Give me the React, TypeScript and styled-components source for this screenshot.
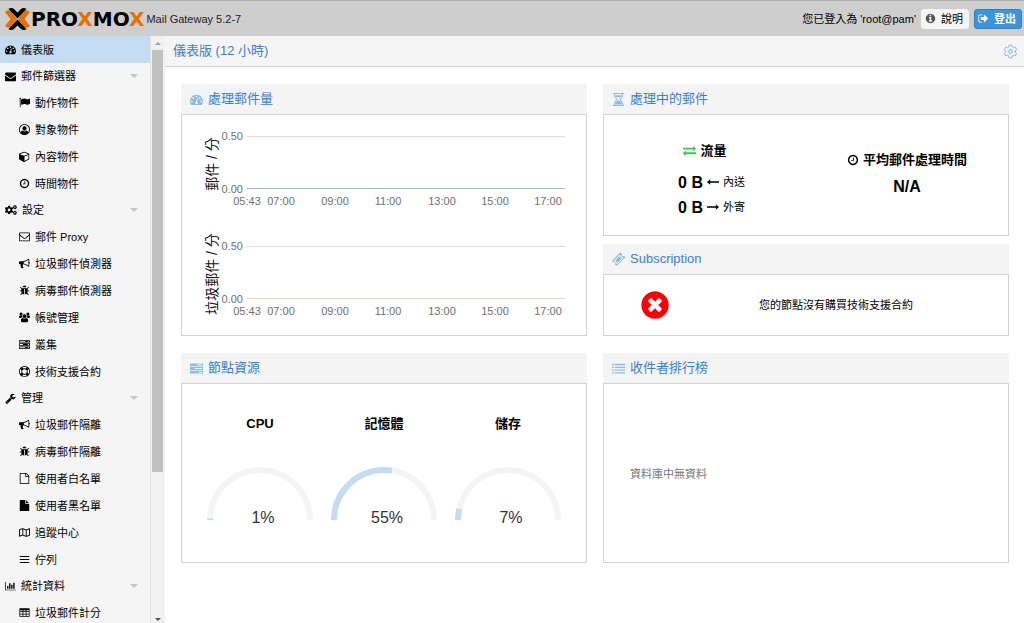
import React from "react";
import styled, { createGlobalStyle } from "styled-components";
import { FaCogs, FaRegMap } from "react-icons/fa";
import { IoSettingsOutline } from "react-icons/io5";

const GlobalStyle = createGlobalStyle`
  * { box-sizing: border-box; }
  body {
    margin: 0;
    background: #fff;
    color: #000;
    font: 11px/16px "Liberation Sans", "Noto Sans CJK TC", sans-serif;
  }
  button { font: inherit; cursor: pointer; }
  h1, h2, h3, ul, p { margin: 0; padding: 0; font-weight: normal; }
  ul { list-style: none; }
`;

/* ---------- icons ---------- */

const DISC =
  "M1664 896q0 209-103 385.5t-279.5 279.5-385.5 103-385.5-103-279.5-279.5-103-385.5 103-385.5 279.5-279.5 385.5-103 385.5 103 279.5 279.5 103 385.5z";

const paths = {
  gauge:
    "M384 1152q0-53-37.5-90.5t-90.5-37.5-90.5 37.5-37.5 90.5 37.5 90.5 90.5 37.5 90.5-37.5 37.5-90.5zm192-448q0-53-37.5-90.5t-90.5-37.5-90.5 37.5-37.5 90.5 37.5 90.5 90.5 37.5 90.5-37.5 37.5-90.5zm428 481l101-382q6-26-7.5-48.5t-38.5-29.5-48 6.5-30 39.5l-101 382q-60 5-107 43.5t-63 98.5q-20 77 20 146t117 89 146-20 89-117q16-60-6-117t-72-91zm660-33q0-53-37.5-90.5t-90.5-37.5-90.5 37.5-37.5 90.5 37.5 90.5 90.5 37.5 90.5-37.5 37.5-90.5zm-640-640q0-53-37.5-90.5t-90.5-37.5-90.5 37.5-37.5 90.5 37.5 90.5 90.5 37.5 90.5-37.5 37.5-90.5zm448 192q0-53-37.5-90.5t-90.5-37.5-90.5 37.5-37.5 90.5 37.5 90.5 90.5 37.5 90.5-37.5 37.5-90.5zm320 448q0 261-141 483-19 29-54 29h-1402q-35 0-54-29-141-221-141-483 0-182 71-348t191-286 286-191 348-71 348 71 286 191 191 286 71 348z",
  envelope:
    "M1792 710v794q0 66-47 113t-113 47h-1472q-66 0-113-47t-47-113v-794q44 49 101 87 362 246 497 345 57 42 92.5 65.5t94.5 48 110 24.5h2q51 0 110-24.5t94.5-48 92.5-65.5q170-123 498-345 57-39 100-87zm0-294q0 79-49 151t-122 123q-376 261-468 325-10 7-42.5 31t-54 38.5-52 32.5-57.5 27-50 9h-2q-23 0-50-9t-57.5-27-52-32.5-54-38.5-42.5-31q-91-64-262-182.5t-205-142.5q-62-42-117-115.5t-55-136.5q0-78 41.5-130t118.5-52h1472q65 0 112.5 47t47.5 113z",
  envelopeOpen:
    "M1664 1504v-768q-32 36-69 66-268 206-426 338-51 43-83 67t-86.5 48.5-102.5 24.5h-2q-48 0-102.5-24.5t-86.5-48.5-83-67q-158-132-426-338-37-30-69-66v768q0 13 9.5 22.5t22.5 9.5h1472q13 0 22.5-9.5t9.5-22.5zm0-1051v-24.5l-.5-13-3-12.5-5.5-9-9-7.5-14-2.5h-1472q-13 0-22.5 9.5t-9.5 22.5q0 168 147 284 193 152 401 317 6 5 35 29.5t46 37.5 44.5 31.5 50.5 27.5 43 9h2q20 0 43-9t50.5-27.5 44.5-31.5 46-37.5 35-29.5q208-165 401-317 54-43 100.5-115.5t46.5-131.5zm128-37v1088q0 66-47 113t-113 47h-1472q-66 0-113-47t-47-113v-1088q0-66 47-113t113-47h1472q66 0 113 47t47 113z",
  flag:
    "M320 256q0 72-64 110v1266q0 13-9.5 22.5t-22.5 9.5h-64q-13 0-22.5-9.5t-9.5-22.5v-1266q-64-38-64-110 0-53 37.5-90.5t90.5-37.5 90.5 37.5 37.5 90.5zm1472 64v763q0 25-12.5 38.5t-39.5 27.5q-215 116-369 116-61 0-123.5-22t-108.5-48-115.5-48-142.5-22q-192 0-464 146-17 9-33 9-26 0-45-19t-19-45v-742q0-32 31-55 21-14 79-43 236-120 421-120 107 0 200 29t219 88q38 19 88 19 54 0 117.5-21t110-47 88-47 54.5-21q26 0 45 19t19 45z",
  user:
    "M896 0a896 896 0 1 0 0 1792a896 896 0 1 0 0-1792zM896 140a756 756 0 0 1 590 1230c-50-200-150-300-300-310a400 400 0 0 1-580 0c-150 10-250 110-300 310A756 756 0 0 1 896 140zM896 380a350 350 0 1 1 0 700a350 350 0 1 1 0-700z",
  users:
    "M896 352a320 320 0 1 1 0 640a320 320 0 1 1 0-640zM560 960q150 110 336 110t336-110q260 30 260 480 0 224-192 224H492q-192 0-192-224 0-450 260-480zM340 64a250 250 0 1 1 0 500a250 250 0 1 1 0-500zM1452 64a250 250 0 1 1 0 500a250 250 0 1 1 0-500zM130 560q200 120 370 30 0 160 50 260-150 20-220 120H150Q-10 970-10 830 0 600 130 560zM1662 560q-200 120-370 30 0 160-50 260 150 20 220 120h180q160 0 160-140-10-230-140-270z",
  cube:
    "M896 1629l640-349v-636l-640 233v752zm-64-865l698-254-698-254-698 254zm832-252v768q0 35-18 65t-49 47l-704 384q-28 16-61 16t-61-16l-704-384q-31-17-49-47t-18-65v-768q0-40 23-73t61-47l704-256q22-8 44-8t44 8l704 256q38 14 61 47t23 73z",
  clock:
    "M1024 544v448q0 14-9 23t-23 9h-320q-14 0-23-9t-9-23v-64q0-14 9-23t23-9h224v-352q0-14 9-23t23-9h64q14 0 23 9t9 23zm416 352q0-148-73-273t-198-198-273-73-273 73-198 198-73 273 73 273 198 198 273 73 273-73 198-198 73-273zm224 0q0 209-103 385.5t-279.5 279.5-385.5 103-385.5-103-279.5-279.5-103-385.5 103-385.5 279.5-279.5 385.5-103 385.5 103 279.5 279.5 103 385.5z",
  bullhorn:
    "M1664 640q53 0 90.5 37.5t37.5 90.5-37.5 90.5-90.5 37.5v384q0 52-38 90t-90 38q-417-347-812-380-58 19-91 66t-31 100.5 40 92.5q-20 33-23 65.5t6 58 33.5 55 48 50 61.5 50.5q-29 58-111.5 83t-168.5 11.5-132-55.5q-7-23-29.5-87.5t-32-94.5-23-89-15-101 3.5-98.5 22-110.5h-122q-66 0-113-47t-47-113v-192q0-66 47-113t113-47h480q435 0 896-384 52 0 90 38t38 90v384zm-128 604v-954q-394 302-768 343v270q377 42 768 341z",
  bug:
    "M1696 960q0 26-19 45t-45 19h-224q0 171-67 290l208 209q19 19 19 45t-19 45q-18 19-45 19t-45-19l-198-197q-5 5-15 13t-42 28.5-65 36.5-82 29-97 13v-896h-128v896q-51 0-101.5-13.5t-87-33-66-39-43.5-32.5l-15-14-183 207q-20 21-48 21-24 0-43-16-19-18-20.5-44.5t15.5-46.5l202-227q-58-114-58-274h-224q-26 0-45-19t-19-45 19-45 45-19h224v-294l-173-173q-19-19-19-45t19-45 45-19 45 19l173 173h844l173-173q19-19 45-19t45 19 19 45-19 45l-173 173v294h224q26 0 45 19t19 45zm-480-576h-640q0-133 93.5-226.5t226.5-93.5 226.5 93.5 93.5 226.5z",
  server:
    "M0 192h1792v384H0zM128 320v128h896v-128zM1440 320v128h192v-128zM0 704h1792v384H0zM128 832v128h512v-128zM1440 832v128h192v-128zM0 1216h1792v384H0zM128 1344v128h896v-128zM1440 1344v128h192v-128z",
  ring:
    "M896 0q182 0 348 71t286 191 191 286 71 348-71 348-191 286-286 191-348 71-348-71-286-191-191-286-71-348 71-348 191-286 286-191 348-71zm0 128q-190 0-361 90l194 194q82-28 167-28t167 28l194-194q-171-90-361-90zm-678 1129l194-194q-28-82-28-167t28-167l-194-194q-90 171-90 361t90 361zm678 407q190 0 361-90l-194-194q-82 28-167 28t-167-28l-194 194q171 90 361 90zm0-384q159 0 271.5-112.5t112.5-271.5-112.5-271.5-271.5-112.5-271.5 112.5-112.5 271.5 112.5 271.5 271.5 112.5zm484-217l194 194q90-171 90-361t-90-361l-194 194q28 82 28 167t-28 167z",
  wrench:
    "M448 1472q0-26-19-45t-45-19-45 19-19 45 19 45 45 19 45-19 19-45zm644-420l-682 682q-37 37-90 37-52 0-91-37l-106-108q-38-36-38-90 0-53 38-91l681-681q39 98 114.5 173.5t173.5 114.5zm634-435q0 39-23 106-47 134-164.5 217.5t-258.5 83.5q-185 0-316.5-131.5t-131.5-316.5 131.5-316.5 316.5-131.5q58 0 121.5 16.5t107.5 46.5q16 11 16 28t-16 28l-293 169v224l193 107q5-3 79-48.5t135.5-81 70.5-35.5q15 0 23.5 10t8.5 25z",
  fileOpen:
    "M1596 380q28 28 48 76t20 88v1152q0 40-28 68t-68 28H224q-40 0-68-28t-28-68V96q0-40 28-68t68-28h896q40 0 88 20t76 48zM1152 136v376h376q-10-29-22-41l-313-313q-12-12-41-22zM1536 1664V640h-416q-40 0-68-28t-28-68V128H256v1536z",
  file:
    "M1152 512v-472q22 14 36 28l408 408q14 14 28 36h-472zm-128 32q0 40 28 68t68 28h544v1056q0 40-28 68t-68 28h-1344q-40 0-68-28t-28-68v-1600q0-40 28-68t68-28h800v544z",
  bars: "M128 320h1536v180H128zM128 806h1536v180H128zM128 1292h1536v180H128z",
  chart:
    "M560 832v448h-224v-448zM896 384v896h-224v-896zM1792 1408v112H0V176h112v1232zM1232 608v672h-224v-672zM1568 272v1008h-224V272z",
  table:
    "M160 192h1472q96 0 96 96v1216q0 96-96 96H160q-96 0-96-96V288q0-96 96-96zM192 512v192h384V512zM704 512v192h384V512zM1216 512v192h384V512zM192 832v256h384V832zM704 832v256h384V832zM1216 832v256h384V832zM192 1216v256h384v-256zM704 1216v256h384v-256zM1216 1216v256h384v-256z",
  exchange:
    "M1792 1184v192q0 13-9.5 22.5t-22.5 9.5h-1376v192q0 13-9.5 22.5t-22.5 9.5q-12 0-24-10l-319-320q-9-9-9-22 0-14 9-23l320-320q9-9 23-9 13 0 22.5 9.5t9.5 22.5v192h1376q13 0 22.5 9.5t9.5 22.5zm0-544q0 14-9 23l-320 320q-9 9-23 9-13 0-22.5-9.5t-9.5-22.5v-192h-1376q-13 0-22.5-9.5t-9.5-22.5v-192q0-13 9.5-22.5t22.5-9.5h1376v-192q0-14 9-23t23-9q12 0 24 10l319 319q9 9 9 23z",
  hourglass:
    "M128 0h1536v128H128zM128 1664h1536v128H128zM256 128h128q0 420 330 660v216Q384 1244 384 1664H256q0-480 340-768Q256 608 256 128zM1536 128h-128q0 420-330 660v216q330 240 330 660h128q0-480-340-768q340-288 340-768zM440 320h912q-30 130-110 220H550q-80-90-110-220zM896 1010q300 150 420 430l30 160H446l30-160q120-280 420-430z",
  ticket:
    "M1024 452l316 316-572 572-316-316zM1702 724l-978 980q-38 36-91 36t-90-36l-138-136q56-56 56-136t-56-136-136-56-136 56L90 1160q-37-38-37-91t37-90L1068 2q37-38 90-38t91 38l136 134q-56 56-56 136t56 136 136 56 136-56l137 136q36 37 36 90t-36 90zM768 1521l753-753q19-19 19-45t-19-45l-407-407q-18-18-45-18t-45 18l-753 753q-19 19-19 45t19 45l407 407q18 18 45 18t45-18z",
  tasks:
    "M0 192h1792v384H0zM1024 320v128h640v-128zM0 704h1792v384H0zM640 832v128h1024v-128zM0 1216h1792v384H0zM1216 1344v128h448v-128z",
  list:
    "M0 256h256v192H0zM384 256h1408v192H384zM0 640h256v192H0zM384 640h1408v192H384zM0 1024h256v192H0zM384 1024h1408v192H384zM0 1408h256v192H0zM384 1408h1408v192H384z",
  info:
    "M1152 1376v-160q0-14-9-23t-23-9h-96v-512q0-14-9-23t-23-9h-320q-14 0-23 9t-9 23v160q0 14 9 23t23 9h96v320h-96q-14 0-23 9t-9 23v160q0 14 9 23t23 9h448q14 0 23-9t9-23zm-128-896v-160q0-14-9-23t-23-9h-192q-14 0-23 9t-9 23v160q0 14 9 23t23 9h192q14 0 23-9t9-23z" +
    DISC,
  signOut:
    "M704 1440v64q0 32-32 32H352q-119 0-203.5-84.5T64 1248V544q0-119 84.5-203.5T352 256h320q32 0 32 32v64q0 32-32 32H352q-66 0-113 47t-47 113v704q0 66 47 113t113 47h312q40 0 40 32zM1632 896q0 26-19 45l-544 544q-19 19-45 19t-45-19-19-45v-288H512q-26 0-45-19t-19-45V704q0-26 19-45t45-19h448V352q0-26 19-45t45-19 45 19l544 544q19 19 19 45z",
  times:
    "M1277 1122q0-26-19-45l-181-181 181-181q19-19 19-45 0-27-19-46l-90-90q-19-19-46-19-26 0-45 19l-181 181-181-181q-19-19-45-19-27 0-46 19l-90 90q-19 19-19 46 0 26 19 45l181 181-181 181q-19 19-19 45 0 27 19 46l90 90q19 19 46 19 26 0 45-19l181-181 181 181q19 19 45 19 27 0 46-19l90-90q19-19 19-46z" +
    DISC,
  arrowLeft: "M0 896l480-400v300h1312v200H480v300z",
  arrowRight: "M1792 896l-480-400v300H0v200h1312v300z",
};

type GlyphName = keyof typeof paths;

const Svg = styled.svg<{ $size: number }>`
  width: ${(p) => p.$size}px;
  height: ${(p) => p.$size}px;
  flex: none;
  fill: currentColor;
  overflow: visible;
`;

const Glyph = ({ name, size = 11 }: { name: GlyphName; size?: number }) => (
  <Svg $size={size} viewBox="0 0 1792 1792" aria-hidden="true">
    <path fillRule="evenodd" d={paths[name]} />
  </Svg>
);

/* ---------- header ---------- */

const Page = styled.div`
  height: 100vh;
  display: grid;
  grid-template: 36px minmax(0, 1fr) / 165px minmax(0, 1fr);
`;

const Header = styled.header`
  grid-column: 1 / -1;
  display: flex;
  align-items: center;
  padding: 0 2px 0 5px;
  background: #cecece;
  border-top: 1px solid #b4b4b4;
`;

const Mark = styled.svg`
  width: 25px;
  height: 22px;
`;

const Wordmark = styled.span`
  margin: 0 2px 0 1px;
  font: bold 20px/24px "DejaVu Sans", sans-serif;
  color: #000;
  em {
    font-style: normal;
    color: #e57000;
  }
`;

const Product = styled.h1`
  flex: 1;
  font-size: 11px;
  color: #222;
`;

const HeaderButton = styled.button<{ $primary?: boolean }>`
  display: flex;
  align-items: center;
  gap: 5px;
  height: 20px;
  margin-left: 5px;
  padding: 0 5px 0 3px;
  border: 1px solid ${(p) => (p.$primary ? "#3080c0" : "#f5f5f5")};
  border-radius: 3px;
  background: ${(p) => (p.$primary ? "#3f94d6" : "#f5f5f5")};
  color: ${(p) => (p.$primary ? "#fff" : "#000")};
  font-weight: ${(p) => (p.$primary ? "bold" : "normal")};
  svg {
    color: ${(p) => (p.$primary ? "#fff" : "#555")};
  }
`;

/* ---------- sidebar ---------- */

const Sidebar = styled.aside`
  display: flex;
  min-height: 0;
  background: #f5f5f5;
`;

const Nav = styled.nav`
  flex: 1;
  overflow: hidden;
  border-right: 1px solid #e2e2e2;
`;

const NavLink = styled.a<{ $level: "top" | "group" | "child"; $active?: boolean }>`
  display: flex;
  align-items: center;
  height: ${(p) => (p.$level === "group" ? 26 : 27)}px;
  padding: 0 12px 0 ${(p) => (p.$level === "child" ? 19 : 5)}px;
  gap: 5px;
  color: #000;
  text-decoration: none;
  background: ${(p) => (p.$active ? "#c3dcf2" : "transparent")};
  svg {
    flex: none;
  }
  span {
    flex: 1;
    white-space: nowrap;
  }
`;

const Caret = styled.i<{ $up?: boolean; $size: number; $color: string }>`
  width: 0;
  height: 0;
  border: ${(p) => p.$size}px solid transparent;
  border-${(p) => (p.$up ? "bottom" : "top")}-color: ${(p) => p.$color};
  border-${(p) => (p.$up ? "top" : "bottom")}-width: 0;
`;

const Scrollbar = styled.div`
  width: 14px;
  display: flex;
  flex-direction: column;
  align-items: center;
  padding: 6px 2px 2px 1px;
  gap: 5px;
  background: #f1f1f1;
`;

const Track = styled.div`
  flex: 1;
  width: 100%;
`;

const Thumb = styled.div`
  height: 75%;
  background: #c1c1c1;
`;

type Item = { label: string; icon: React.ReactNode };
const g = (name: GlyphName) => <Glyph name={name} />;

const groups: { label: string; icon: React.ReactNode; items: Item[] }[] = [
  {
    label: "郵件篩選器",
    icon: g("envelope"),
    items: [
      { label: "動作物件", icon: g("flag") },
      { label: "對象物件", icon: g("user") },
      { label: "內容物件", icon: g("cube") },
      { label: "時間物件", icon: g("clock") },
    ],
  },
  {
    label: "設定",
    icon: <FaCogs size={12} />,
    items: [
      { label: "郵件 Proxy", icon: g("envelopeOpen") },
      { label: "垃圾郵件偵測器", icon: g("bullhorn") },
      { label: "病毒郵件偵測器", icon: g("bug") },
      { label: "帳號管理", icon: g("users") },
      { label: "叢集", icon: g("server") },
      { label: "技術支援合約", icon: g("ring") },
    ],
  },
  {
    label: "管理",
    icon: g("wrench"),
    items: [
      { label: "垃圾郵件隔離", icon: g("bullhorn") },
      { label: "病毒郵件隔離", icon: g("bug") },
      { label: "使用者白名單", icon: g("fileOpen") },
      { label: "使用者黑名單", icon: g("file") },
      { label: "追蹤中心", icon: <FaRegMap size={11} /> },
      { label: "佇列", icon: g("bars") },
    ],
  },
  {
    label: "統計資料",
    icon: g("chart"),
    items: [{ label: "垃圾郵件計分", icon: g("table") }],
  },
];

/* ---------- content ---------- */

const Main = styled.main`
  min-width: 0;
  overflow: hidden;
`;

const Toolbar = styled.div`
  display: flex;
  align-items: center;
  justify-content: space-between;
  height: 31px;
  padding: 0 6px 0 8px;
  background: #f5f5f5;
  border-bottom: 1px solid #d0d0d0;
  color: #3d7fc8;
`;

const Title = styled.h2`
  font-size: 13px;
`;

const IconButton = styled.button`
  display: flex;
  padding: 0;
  border: 0;
  background: none;
  color: #7fb0e0;
`;

const Board = styled.div`
  display: grid;
  grid-template-columns: repeat(2, minmax(0, 1fr));
  gap: 17px 16px;
  padding: 17px 15px 17px 16px;
`;

const Stack = styled.div`
  display: flex;
  flex-direction: column;
  gap: 8px;
`;

const Card = styled.section<{ $grow?: boolean }>`
  display: flex;
  flex-direction: column;
  flex: ${(p) => (p.$grow ? 1 : "none")};
`;

const CardHead = styled.header`
  display: flex;
  align-items: center;
  gap: 5px;
  height: 30px;
  padding: 0 9px;
  background: #f4f4f4;
  color: #3d7fc8;
  svg {
    color: #8cbae4;
  }
`;

const CardBody = styled.div<{ $minHeight?: number }>`
  flex: 1;
  display: flex;
  align-items: center;
  min-height: ${(p) => p.$minHeight ?? 0}px;
  border: 1px solid #d2d2d2;
`;

type PanelProps = {
  icon: GlyphName;
  title: string;
  minHeight?: number;
  grow?: boolean;
  children: React.ReactNode;
};

const Panel = ({ icon, title, minHeight, grow, children }: PanelProps) => (
  <Card $grow={grow}>
    <CardHead>
      <Glyph name={icon} size={13} />
      <Title as="h3">{title}</Title>
    </CardHead>
    <CardBody $minHeight={minHeight}>{children}</CardBody>
  </Card>
);

const Charts = styled.div`
  flex: 1;
  display: flex;
  flex-direction: column;
`;

const ChartSvg = styled.svg`
  display: block;
  width: 100%;
  font-size: 11px;
  fill: #707070;
`;

const ticks: [string, number][] = [
  ["05:43", 65],
  ["07:00", 99],
  ["09:00", 153],
  ["11:00", 206],
  ["13:00", 260],
  ["15:00", 313],
  ["17:00", 366],
];

const Chart = ({ label, color }: { label: string; color: string }) => (
  <ChartSvg viewBox="0 0 404 110">
    <text transform="translate(35 49) rotate(-90)" textAnchor="middle" fontSize="14" fill="#111">
      {label}
    </text>
    <text x="61" y="25" textAnchor="end">0.50</text>
    <text x="61" y="78" textAnchor="end">0.00</text>
    <path d="M65 21.5H383" stroke="#dcdcdc" />
    <path d="M65 73.5H383" stroke={color} />
    {ticks.map(([t, x]) => (
      <text key={t} x={x} y="90" textAnchor="middle">{t}</text>
    ))}
  </ChartSvg>
);

const Half = styled.div<{ $top?: number; $bottom?: number }>`
  flex: 1;
  display: flex;
  flex-direction: column;
  align-items: center;
  gap: 9px;
  padding: ${(p) => p.$top ?? 0}px 0 ${(p) => p.$bottom ?? 0}px;
`;

const Caption = styled.div`
  display: flex;
  align-items: center;
  gap: 4px;
  font-size: 13px;
  line-height: 20px;
  font-weight: bold;
`;

const Flow = styled.span`
  display: flex;
  color: #3dc45a;
`;

const Rates = styled.div`
  width: 100%;
`;

const Rate = styled.div`
  display: grid;
  grid-template-columns: 1fr 1fr;
  align-items: center;
  gap: 4px;
  line-height: 25px;
`;

const Value = styled.strong`
  font-size: 16px;
  text-align: right;
`;

const RateLabel = styled.span`
  display: flex;
  align-items: center;
  gap: 4px;
`;

const Status = styled.div`
  width: 102px;
  display: flex;
  justify-content: center;
  color: #fb0007;
`;

const Notice = styled.p`
  flex: 1;
  padding-right: 42px;
  text-align: center;
`;

const Gauges = styled.div`
  flex: 1;
  align-self: flex-start;
  display: grid;
  grid-template-columns: repeat(3, 1fr);
  padding: 30px 16px 0;
`;

const GaugeBox = styled.div`
  display: flex;
  flex-direction: column;
  align-items: center;
  gap: 32px;
`;

const GaugeSvg = styled.svg`
  width: 100%;
  max-width: 160px;
  fill: none;
  stroke-width: 6;
`;

const R = 50;
const Gauge = ({ label, value }: { label: string; value: number }) => (
  <GaugeBox>
    <Caption>{label}</Caption>
    <GaugeSvg viewBox="0 0 124 64">
      <path d="M12 54a50 50 0 0 1 100 0" stroke="#f4f4f4" />
      <path
        d="M12 54a50 50 0 0 1 100 0"
        stroke="#c3dcf2"
        strokeDasharray={`${(Math.PI * R * value) / 100} 400`}
      />
      <text x="65" y="57" textAnchor="middle" fontSize="16" fill="#333">{value}%</text>
    </GaugeSvg>
  </GaugeBox>
);

const Empty = styled.p`
  padding: 2px 26px 0;
  color: #777;
`;

export default function App() {
  return (
    <>
      <GlobalStyle />
      <Page>
        <Header>
          <Mark viewBox="0 0 25 22" aria-hidden="true">
            <path d="M0 4Q1 2.500 3 2.500H5L12 11 5 19.500H3Q1 19.500 0 18L5.500 11z" fill="#e57000" />
            <path d="M25 4Q24 2.500 22 2.500H20L13 11l7 8.500h2Q24 19.500 25 18L19.500 11z" fill="#e57000" />
            <path d="M3.500 1Q4.500 0 6 0Q8 0 9 1L12.500 4.500 16 1Q17 0 19 0Q20.500 0 21.500 1L12.500 10.500z" />
            <path d="M3.500 21Q4.500 22 6 22Q8 22 9 21L12.500 17.500 16 21Q17 22 19 22Q20.500 22 21.500 21L12.500 11.500z" />
          </Mark>
          <Wordmark>
            PRO<em>X</em>MO<em>X</em>
          </Wordmark>
          <Product>Mail Gateway 5.2-7</Product>
          <span>您已登入為 'root@pam'</span>
          <HeaderButton type="button">
            <Glyph name="info" />
            說明
          </HeaderButton>
          <HeaderButton type="button" $primary>
            <Glyph name="signOut" />
            登出
          </HeaderButton>
        </Header>

        <Sidebar>
          <Nav>
            <NavLink href="#dashboard" $level="top" $active>
              {g("gauge")}
              <span>儀表版</span>
            </NavLink>
            {groups.map((group) => (
              <div key={group.label}>
                <NavLink href="#group" $level="group">
                  {group.icon}
                  <span>{group.label}</span>
                  <Caret $size={4} $color="#c6c6c6" />
                </NavLink>
                <ul>
                  {group.items.map((item) => (
                    <li key={item.label}>
                      <NavLink href="#item" $level="child">
                        {item.icon}
                        <span>{item.label}</span>
                      </NavLink>
                    </li>
                  ))}
                </ul>
              </div>
            ))}
          </Nav>
          <Scrollbar aria-hidden="true">
            <Caret $up $size={3} $color="#a0a0a0" />
            <Track>
              <Thumb />
            </Track>
            <Caret $size={3} $color="#505050" />
          </Scrollbar>
        </Sidebar>

        <Main>
          <Toolbar>
            <Title>儀表版 (12 小時)</Title>
            <IconButton type="button" aria-label="設定">
              <IoSettingsOutline size={15} />
            </IconButton>
          </Toolbar>
          <Board>
            <Panel icon="gauge" title="處理郵件量">
              <Charts>
                <Chart label="郵件 / 分" color="#a3bdbd" />
                <Chart label="垃圾郵件 / 分" color="#e8d3c0" />
              </Charts>
            </Panel>
            <Stack>
              <Panel icon="hourglass" title="處理中的郵件" grow>
                <Half $top={10}>
                  <Caption>
                    <Flow>
                      <Glyph name="exchange" size={13} />
                    </Flow>
                    流量
                  </Caption>
                  <Rates>
                    <Rate>
                      <Value>0 B</Value>
                      <RateLabel>
                        <Glyph name="arrowLeft" size={12} />
                        內送
                      </RateLabel>
                    </Rate>
                    <Rate>
                      <Value>0 B</Value>
                      <RateLabel>
                        <Glyph name="arrowRight" size={12} />
                        外寄
                      </RateLabel>
                    </Rate>
                  </Rates>
                </Half>
                <Half $bottom={5}>
                  <Caption>
                    <Glyph name="clock" size={12} />
                    平均郵件處理時間
                  </Caption>
                  <Value>N/A</Value>
                </Half>
              </Panel>
              <Panel icon="ticket" title="Subscription" minHeight={62}>
                <Status>
                  <Glyph name="times" size={32} />
                </Status>
                <Notice>您的節點沒有購買技術支援合約</Notice>
              </Panel>
            </Stack>
            <Panel icon="tasks" title="節點資源" minHeight={180}>
              <Gauges>
                <Gauge label="CPU" value={1} />
                <Gauge label="記憶體" value={55} />
                <Gauge label="儲存" value={7} />
              </Gauges>
            </Panel>
            <Panel icon="list" title="收件者排行榜" minHeight={180}>
              <Empty>資料庫中無資料</Empty>
            </Panel>
          </Board>
        </Main>
      </Page>
    </>
  );
}
